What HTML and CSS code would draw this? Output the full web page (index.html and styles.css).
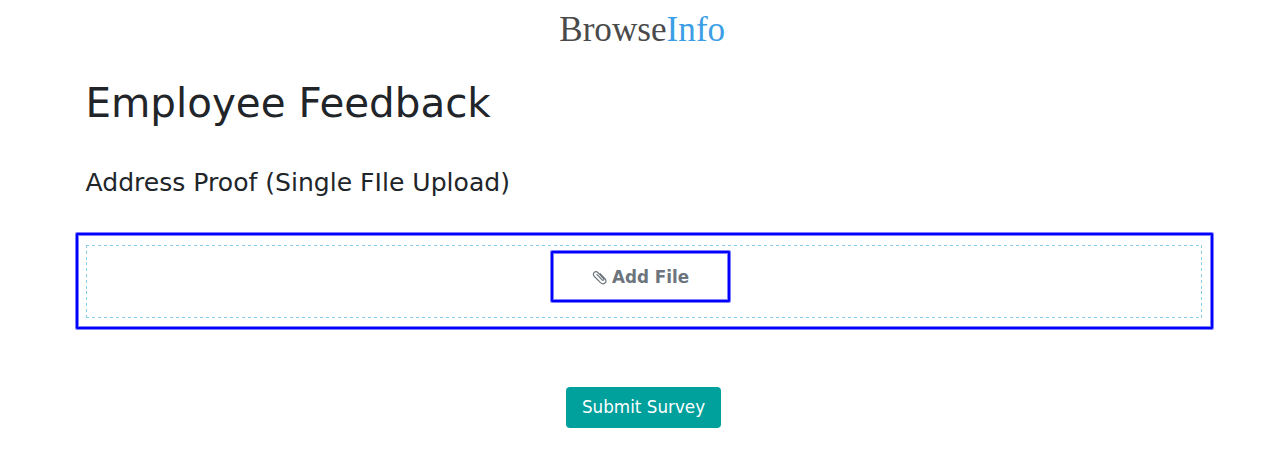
FILE: index.html
```html
<!DOCTYPE html>
<html lang="en">
<head>
<meta charset="utf-8">
<title>Employee Feedback</title>
<link rel="stylesheet" href="styles.css">
</head>
<body>
<header class="brand"><svg class="logo" width="180" height="40" viewBox="0 0 180 40" role="img" aria-label="BrowseInfo"><text class="logo-text" x="7.200" y="32.200" textLength="166" lengthAdjust="spacingAndGlyphs">Browse<tspan class="logo-accent">Info</tspan></text></svg></header>
<main class="survey">
  <h1 class="title">Employee Feedback</h1>
  <h2 class="question">Address Proof (Single FIle Upload)</h2>
  <section class="upload-frame">
    <div class="dropzone">
      <button class="add-file" type="button">
        <svg class="clip" width="16" height="16" viewBox="0 0 16 16" aria-hidden="true"><path d="M4.600 5.200 L10.100 10.900 C11.200 12 12.500 10.700 11.500 9.600 L6.200 3.900 C3.400 1 -.3 4.300 2.400 7.500 L8.500 13.600 C11.700 16.500 15.600 12.800 13.100 9.900 L7.900 4.400"/></svg>
        <span class="add-label">Add File</span>
      </button>
    </div>
  </section>
  <button class="submit" type="button">Submit Survey</button>
</main>
</body>
</html>
```
FILE: styles.css
```css
* { box-sizing: border-box; }
body {
  margin: 0;
  background: #fff;
  color: #212529;
  font-family: "DejaVu Sans", sans-serif;
}
.brand {
  display: flex;
  justify-content: center;
  height: 60px;
  padding-top: 9px;
}
.logo-text {
  font-family: "Liberation Serif", serif;
  font-size: 36px;
  fill: #4a4a4a;
}
.logo-accent { fill: #3c9fe5; }
.survey {
  display: flex;
  flex-direction: column;
  padding: 0 70px 0 75px;
}
.title, .question {
  margin: 0 0 0 10.500px;
  font-weight: 400;
  white-space: nowrap;
}
.title { margin-top: 19px; font-size: 40.400px; line-height: 49px; }
.question { margin-top: 40px; font-size: 25.080px; line-height: 30px; }
.upload-frame, .add-file {
  border: 2px solid #00f;
  border-radius: 1px;
  box-shadow: 0 0 0 1px rgba(0, 0, 255, .5), inset 0 0 0 1px rgba(0, 0, 255, .5);
}
.upload-frame {
  margin: 35px 0 0 1px;
  height: 96px;
  width: 1137px;
  padding: 10px 9px 9px 8px;
}
.dropzone {
  display: flex;
  justify-content: center;
  height: 73px;
  padding: 6px 7px 0 0;
  /* 1px outline drawn as dashes with a 6px period */
  background:
    repeating-linear-gradient(90deg, #87ceeb 0 3px, transparent 3px 6px) 0 0 / 100% 1px no-repeat,
    repeating-linear-gradient(90deg, #87ceeb 0 3px, transparent 3px 6px) 0 100% / 100% 1px no-repeat,
    repeating-linear-gradient(#87ceeb 0 3px, transparent 3px 5.800px) 0 0 / 1px 100% no-repeat,
    repeating-linear-gradient(#87ceeb 0 3px, transparent 3px 5.800px) 100% 0 / 1px 100% no-repeat;
}
.add-file {
  display: flex;
  align-items: center;
  justify-content: center;
  gap: 4px;
  width: 179px;
  height: 51px;
  padding: 1px 0 0;
  background: transparent;
  color: #6c757d;
  font: bold 16.800px "DejaVu Sans", sans-serif;
}
.clip {
  fill: none;
  stroke: currentColor;
  stroke-width: 1.200;
}
.submit {
  align-self: center;
  margin: 58px 0 0 -2px;
  width: 155px;
  height: 41px;
  padding: 0 0 2px;
  border: 0;
  border-radius: 4px;
  background: #00a09d;
  color: #fff;
  font: 16.800px "DejaVu Sans", sans-serif;
}
```
